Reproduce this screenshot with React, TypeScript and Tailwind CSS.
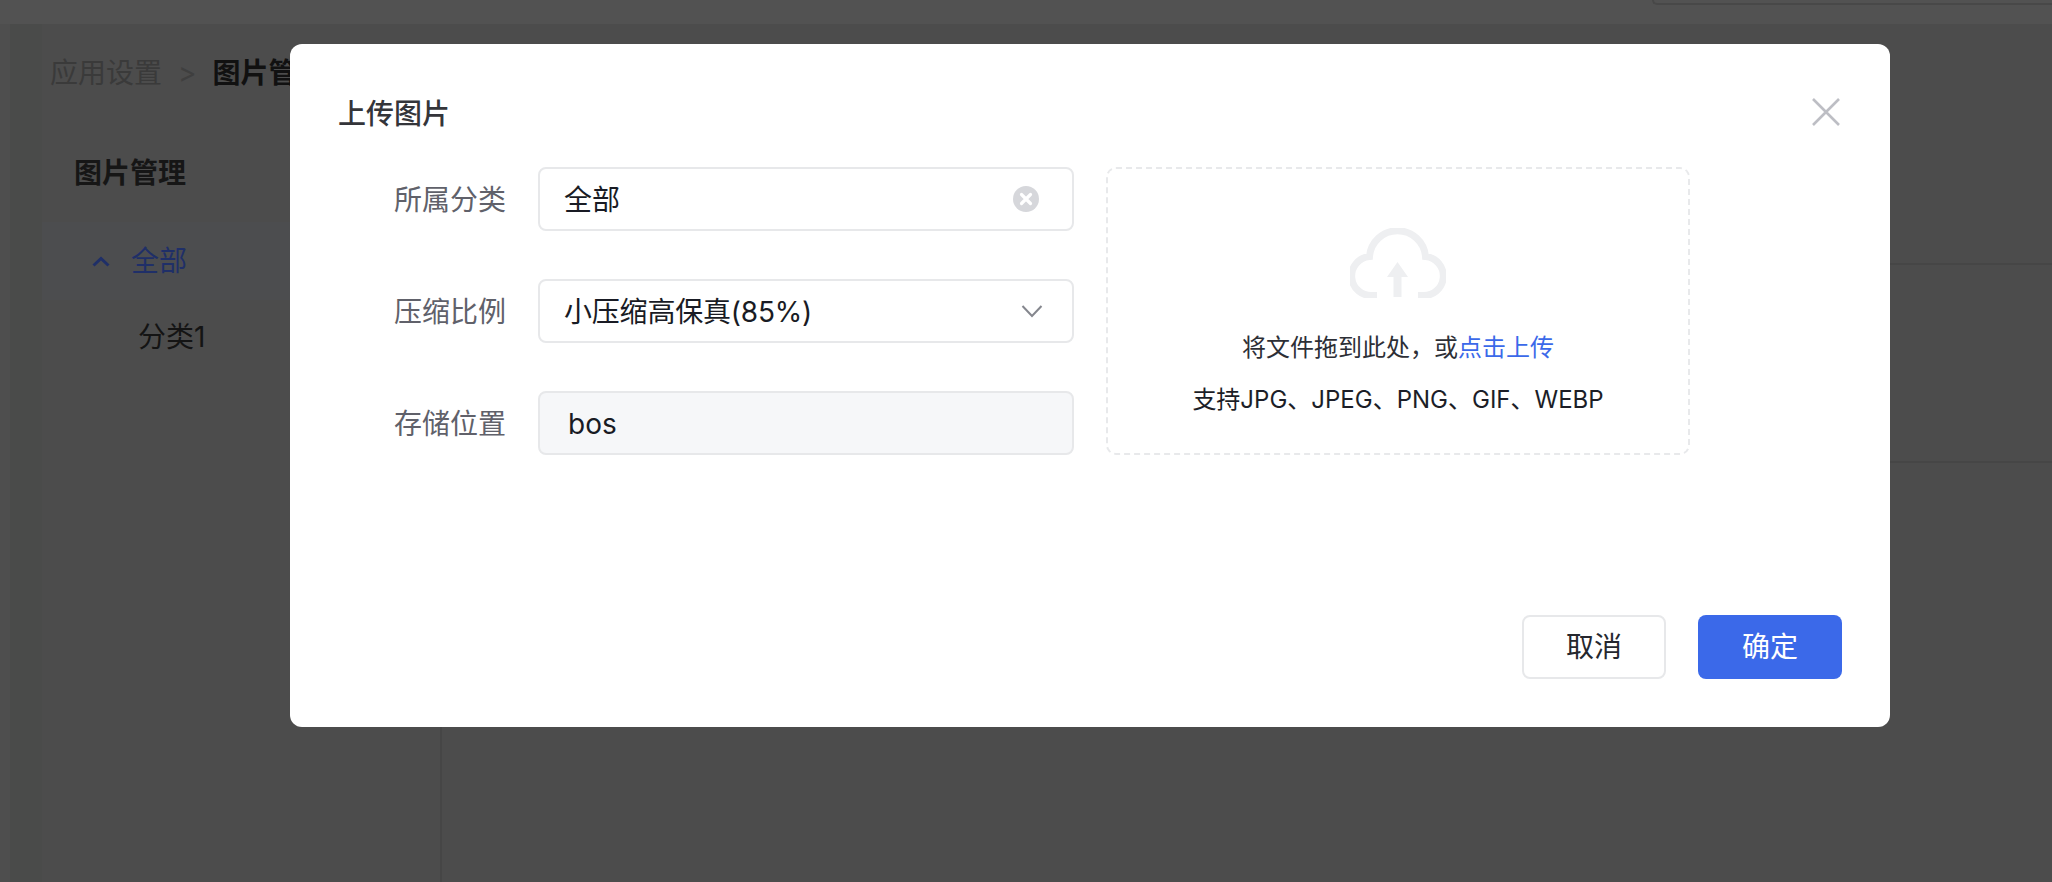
import React from 'react';

const fontStack = { fontFamily: "Inter, 'Noto Sans CJK SC', sans-serif" };

function CloudUpload() {
  return (
    <svg width="96" height="70" viewBox="0 0 96 70" fill="none" className="block">
      <path
        d="M27 67.5H23A19.5 19.5 0 0 1 19.5 28.5A28.1 28.1 0 0 1 75.5 28.5A19.5 19.5 0 0 1 72 67.5H68"
        stroke="#eeeff1"
        strokeWidth="7"
      />
      <path d="M47.5 34L58 49H51.5V69H43.5V49H37Z" fill="#eeeff1" />
    </svg>
  );
}

function ClearIcon() {
  return (
    <svg width="26" height="26" viewBox="0 0 26 26" className="block">
      <circle cx="13" cy="13" r="13" fill="#d6d7db" />
      <path d="M8.5 8.5L17.5 17.5M17.5 8.5L8.5 17.5" stroke="#fff" strokeWidth="3.2" strokeLinecap="round" />
    </svg>
  );
}

function SelectArrow() {
  return (
    <svg width="22" height="14" viewBox="0 0 22 14" fill="none" className="block">
      <path d="M1.5 2L11 12L20.5 2" stroke="#85878e" strokeWidth="2" />
    </svg>
  );
}

function CloseIcon() {
  return (
    <svg width="28" height="28" viewBox="0 0 28 28" fill="none" className="block">
      <path d="M1 1L27 27M27 1L1 27" stroke="#bdbec4" strokeWidth="2.6" />
    </svg>
  );
}

function Field({ label, children, className }: { label: string; children: React.ReactNode; className: string }) {
  return (
    <div className="flex items-center">
      <span className="w-[168px] pt-[2px] text-right text-[28px] leading-[40px] text-[#60616a]">{label}</span>
      <div
        className={`ml-[32px] flex h-[64px] w-[536px] items-center rounded-[8px] border-2 border-[#e7e8ea] text-[28px] text-[#191b24] ${className}`}
      >
        {children}
      </div>
    </div>
  );
}

function PageBehind() {
  return (
    <div className="flex h-[882px] w-[2052px] flex-col overflow-hidden bg-[#4c4c4c]">
      <div className="h-[24px] bg-[#525252] pl-[1652px]">
        <div className="h-[5px] rounded-bl-[8px] border-b-2 border-l-2 border-[#484848]" />
      </div>
      <div className="flex flex-1">
        <div className="w-[10px] bg-[#4e4e4e]" />
        <div className="w-[32px] bg-[#4a4b4a]" />
        <div className="flex flex-1 flex-col">
          <div className="flex h-[101px] items-center pb-[3px] pl-[8px] text-[28px]">
            <span className="text-[#3a3a3a]">应用设置</span>
            <span className="ml-[16px] text-[#3f3f3f]">&gt;</span>
            <span className="ml-[16px] font-bold text-[#111111]">图片管理</span>
          </div>
          <div className="flex flex-1">
            <div className="w-[400px] border-r-2 border-[#464646]">
              <div className="flex h-[97px] items-center pb-[2px] pl-[32px] text-[28px] font-bold text-[#161616]">
                图片管理
              </div>
              <div className="flex h-[78px] items-center bg-[#4c4d4f] pl-[50px]">
                <svg width="18" height="11" viewBox="0 0 18 11" fill="none" className="block">
                  <path d="M1.5 9.5L9 2.5L16.5 9.5" stroke="#1f2f68" strokeWidth="3" />
                </svg>
                <span className="ml-[21px] text-[28px] text-[#1f2f68]">全部</span>
              </div>
              <div className="flex h-[74px] items-center pl-[96px] text-[28px] text-[#141414]">分类1</div>
            </div>
            <div className="flex-1">
              <div className="h-[140px] border-b-2 border-[#464646]" />
              <div className="h-[198px] border-b-2 border-[#464646]" />
            </div>
          </div>
        </div>
      </div>
    </div>
  );
}

export default function App() {
  return (
    <div className="relative h-[882px] w-[2052px] overflow-hidden" style={fontStack}>
      <PageBehind />
      <div className="absolute left-[290px] top-[44px] flex h-[683px] w-[1600px] flex-col rounded-[12px] bg-white px-[48px] pb-[48px] pt-[48px]">
        <div className="flex h-[44px] items-center justify-between pr-[2px]">
          <h2 className="text-[28px] font-medium leading-[44px] text-[#34353a]">上传图片</h2>
          <button type="button" aria-label="关闭" className="mb-[4px] block">
            <CloseIcon />
          </button>
        </div>
        <div className="mt-[31px] flex flex-1 items-start">
          <div className="flex flex-col gap-[48px]">
            <Field label="所属分类" className="justify-between bg-white pl-[24px] pr-[33px]">
              <span className="pt-[2px]">全部</span>
              <ClearIcon />
            </Field>
            <Field label="压缩比例" className="justify-between bg-white pl-[24px] pr-[29px]">
              <span className="pt-[2px] tracking-[-0.2px]">小压缩高保真(85%)</span>
              <SelectArrow />
            </Field>
            <Field label="存储位置" className="bg-[#f6f7f9] pl-[28px]">
              <span className="pt-[2px]">bos</span>
            </Field>
          </div>
          <div className="ml-[32px] flex h-[288px] w-[584px] flex-col items-center rounded-[10px] border-2 border-dashed border-[#e8e9eb] pt-[59px] text-[24px] text-[#2d2f36]">
            <CloudUpload />
            <p className="mt-[30px] leading-[40px]">
              将文件拖到此处，或<span className="text-[#3b69e9]">点击上传</span>
            </p>
            <p className="mt-[12px] leading-[40px] text-[#1c1e27]">支持JPG、JPEG、PNG、GIF、WEBP</p>
          </div>
        </div>
        <div className="flex justify-end gap-[32px]">
          <button
            type="button"
            className="h-[64px] w-[144px] rounded-[8px] border-2 border-[#e7e8ea] bg-white text-[28px] text-[#25272e]"
          >
            取消
          </button>
          <button type="button" className="h-[64px] w-[144px] rounded-[8px] bg-[#3b69e9] text-[28px] text-white">
            确定
          </button>
        </div>
      </div>
    </div>
  );
}
